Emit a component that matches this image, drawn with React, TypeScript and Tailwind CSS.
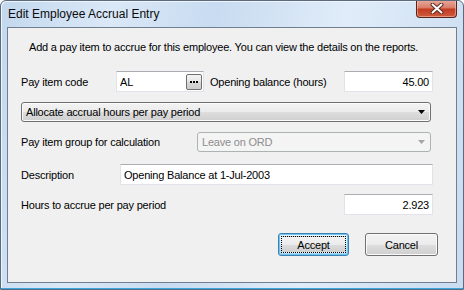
const FONT = "font-['Liberation_Sans',Arial,sans-serif]";

function TextBox({ value, width, align = "left", children }: { value: string; width: string; align?: "left" | "right"; children?: React.ReactNode }) {
  return (
    <div
      className={`${width} h-[21px] flex items-center bg-white border border-[#e2e3ea] border-t-[#abadb3] ${
        align === "right" ? "justify-end pr-[3px]" : "pl-[3px] pr-px"
      }`}
    >
      <span className={align === "right" ? "" : "flex-1"}>{value}</span>
      {children}
    </div>
  );
}

function Arrow({ color }: { color: string }) {
  return (
    <svg width="7" height="4" viewBox="0 0 7 4" className="shrink-0">
      <path d="M0 0h7L3.5 4z" fill={color} />
    </svg>
  );
}

export default function App() {
  return (
    <div
      className={`${FONT} w-[464px] h-[290px] flex flex-col overflow-hidden rounded-t-[6px] border border-[#5b6b7d] bg-[linear-gradient(100deg,#c3d8ee_0%,#dae8f7_22%,#c8dbf0_42%,#e0ecf9_68%,#c9dcf0_100%)] shadow-[inset_0_-1px_0_#38a8e0,inset_1px_1px_0_#eef5fc] text-[11px] tracking-[-0.2px] text-black`}
    >
      {/* title bar */}
      <div className="h-[26px] shrink-0 flex items-start justify-between pl-[7px] pr-[6px]">
        <span className="mt-[5px] text-[12px] tracking-normal leading-[16px] text-[#0b0b0b]">Edit Employee Accrual Entry</span>
        <div className="-mt-px w-[41px] h-[18px] flex items-center justify-center rounded-b-[4px] border border-t-0 border-[#5a2419] bg-[linear-gradient(#e9ab9d,#d97a66_48%,#c23a20_52%,#cf5b3d)] shadow-[inset_0_0_0_1px_rgba(255,220,210,0.45)]">
          <svg width="14" height="11" viewBox="0 0 14 11">
            <path d="M2.5 1.5 11.5 9.5M11.5 1.5 2.5 9.5" stroke="#5a2a22" strokeWidth="4" strokeLinecap="round" />
            <path d="M2.5 1.5 11.5 9.5M11.5 1.5 2.5 9.5" stroke="#ffffff" strokeWidth="2" strokeLinecap="round" />
          </svg>
        </div>
      </div>

      {/* client area */}
      <div className="flex-1 flex px-[6px] pb-[6px]">
        <div className="flex-1 border border-[#6f7f8f] bg-[#f0f0f0] pl-[13px] pt-[12px] leading-[14px]">
          <p className="pl-[8px]">Add a pay item to accrue for this employee. You can view the details on the reports.</p>

          <div className="mt-[17px] flex items-center h-[21px]">
            <span className="w-[95px]">Pay item code</span>
            <TextBox value="AL" width="w-[88px]">
              <div className="w-[16px] h-[16px] flex items-center justify-center gap-[1px] rounded-[2px] border border-[#707070] bg-[linear-gradient(#f4f4f4,#e6e6e6_50%,#d6d6d6_51%,#cdcdcd)]">
                <span className="w-[2px] h-[2px] bg-black" />
                <span className="w-[2px] h-[2px] bg-black" />
                <span className="w-[2px] h-[2px] bg-black" />
              </div>
            </TextBox>
            <span className="w-[140px] pl-[6px]">Opening balance (hours)</span>
            <TextBox value="45.00" width="w-[89px]" align="right" />
          </div>

          <div className="mt-[10px] w-[410px] h-[20px] flex items-center justify-between pl-[4px] pr-[5px] rounded-[3px] border border-[#707070] bg-[linear-gradient(#f3f3f3,#ebebeb_50%,#dddddd_51%,#cfcfcf)] shadow-[inset_0_0_0_1px_#fbfbfb]">
            <span>Allocate accrual hours per pay period</span>
            <Arrow color="#000000" />
          </div>

          <div className="mt-[10px] flex items-center h-[20px]">
            <span className="w-[176px]">Pay item group for calculation</span>
            <div className="w-[234px] h-[20px] flex items-center justify-between pl-[4px] pr-[5px] rounded-[3px] border border-[#adb2b5] bg-[#f4f4f4] text-[#8d8d8d]">
              <span>Leave on ORD</span>
              <Arrow color="#a6a6a6" />
            </div>
          </div>

          <div className="mt-[12px] flex items-center h-[21px]">
            <span className="w-[99px]">Description</span>
            <TextBox value="Opening Balance at 1-Jul-2003" width="w-[313px]" />
          </div>

          <div className="mt-[9px] flex items-center h-[21px]">
            <span className="w-[323px]">Hours to accrue per pay period</span>
            <TextBox value="2.923" width="w-[89px]" align="right" />
          </div>

          <div className="mt-[18px] flex items-center gap-[16px] pl-[257px]">
            <div className="w-[71px] h-[23px] p-[2px] rounded-[3px] border border-[#3c7fb1] bg-[linear-gradient(#eaf6fd,#d9f0fc_50%,#bee6fd_51%,#a7d9f5)] shadow-[inset_0_0_0_1px_#6fc4f0]">
              <div className="h-full flex items-center justify-center border border-dotted border-black bg-[linear-gradient(#f3f3f3,#ebebeb_50%,#dddddd_51%,#cfcfcf)]">
                Accept
              </div>
            </div>
            <div className="w-[73px] h-[23px] flex items-center justify-center rounded-[3px] border border-[#707070] bg-[linear-gradient(#f3f3f3,#ebebeb_50%,#dddddd_51%,#cfcfcf)] shadow-[inset_0_0_0_1px_#fbfbfb]">
              Cancel
            </div>
          </div>
        </div>
      </div>
    </div>
  );
}
